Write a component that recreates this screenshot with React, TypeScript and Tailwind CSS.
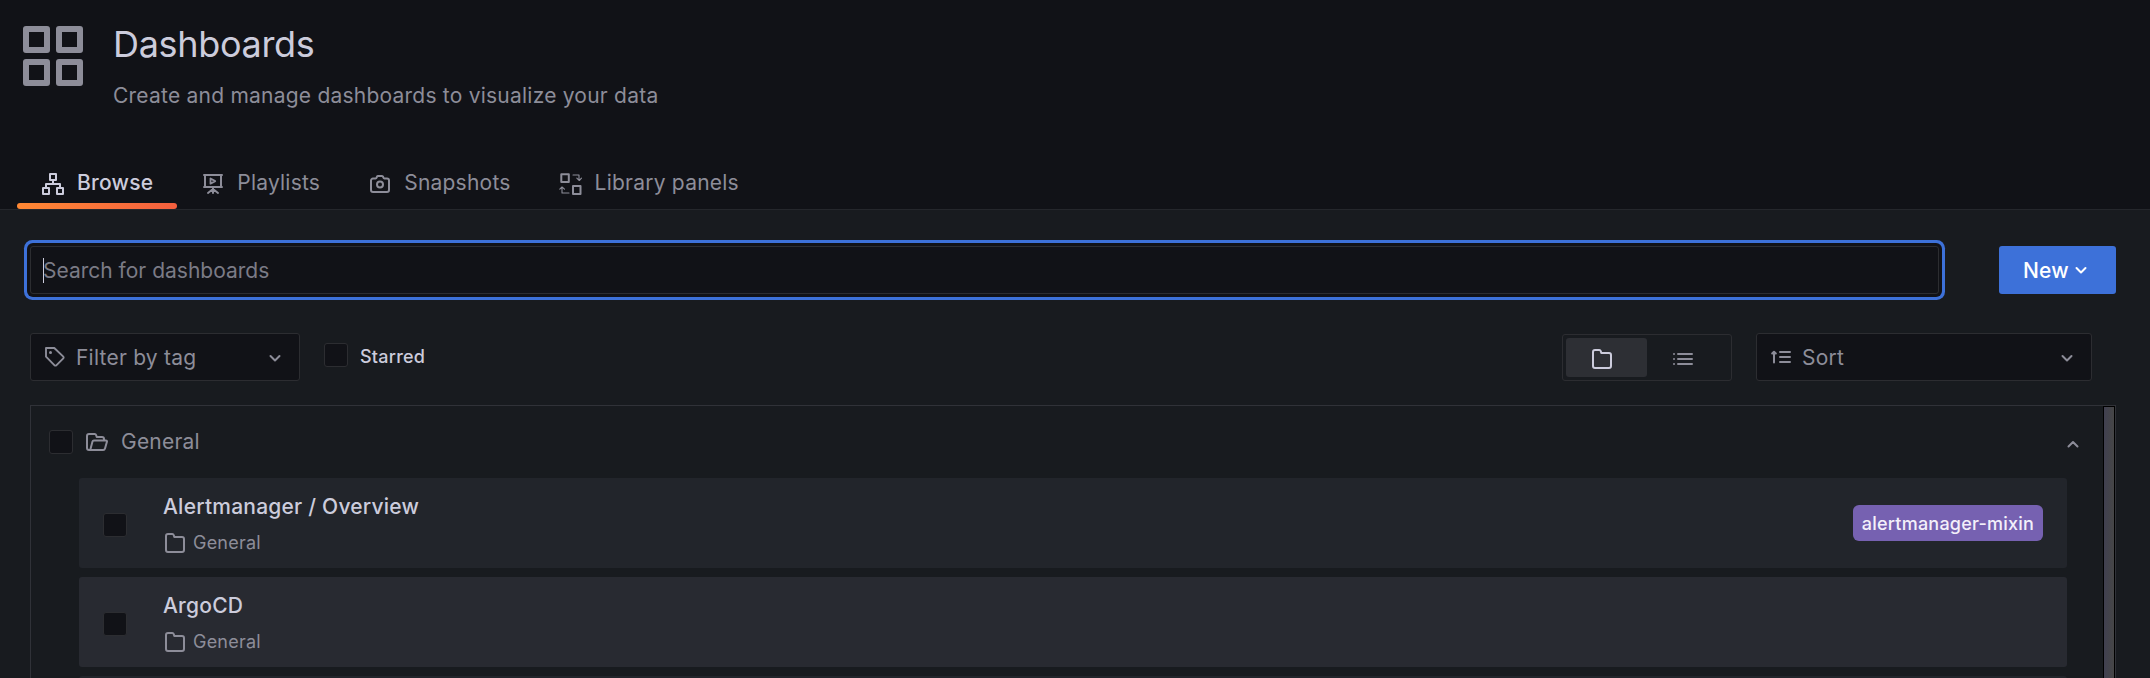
import React from "react";

type IconProps = { className?: string; children?: React.ReactNode };

const Icon = ({ className = "size-6", children }: IconProps) => (
  <svg viewBox="0 0 24 24" fill="none" stroke="currentColor" strokeWidth={2} strokeLinecap="round" strokeLinejoin="round" className={`shrink-0 ${className}`}>
    {children}
  </svg>
);

const AppsIcon = () => (
  <Icon className="size-[72px]">
    <path d="M3 3h7v7H3zM14 3h7v7h-7zM3 14h7v7H3zM14 14h7v7h-7z" />
  </Icon>
);

const SitemapIcon = () => (
  <Icon>
    <path d="M9 2h6v6H9zM2 16h6v6H2zM16 16h6v6h-6zM12 8v4M5 16v-4h14v4" />
  </Icon>
);

const PresentationIcon = () => (
  <Icon>
    <path d="M3 3h18M4 3v12M20 3v12M3 15h18M12 16v5M12 17l-5 4M12 17l5 4" />
    <path d="M9.500 6.500v5.200l4.700-2.600z" strokeWidth={1.800} />
  </Icon>
);

const CameraIcon = () => (
  <Icon>
    <path d="M5 6.500h2.600c.5 0 .8-.3 1-.8l.4-1c.2-.5.6-.7 1-.7h4c.5 0 .9.2 1 .7l.4 1c.2.5.5.8 1 .8H19a2 2 0 0 1 2 2V18a2 2 0 0 1-2 2H5a2 2 0 0 1-2-2V8.500a2 2 0 0 1 2-2z" />
    <circle cx="12" cy="12.500" r="3" />
  </Icon>
);

const LibraryIcon = () => (
  <Icon>
    <path d="M2.300 2.200h7.500v7.800H2.300zM14 14h7.500v8H14z" />
    <path d="M14 3h6v5M17.800 6.200L20.300 8.500l2.200-2.300M10 21H3v-5.500M.8 17.200L3 15l2.500 2.200" strokeWidth={1.100} />
  </Icon>
);

const TagIcon = () => (
  <Icon>
    <path d="M3 3h8.300l9 8.600a1.200 1.200 0 0 1 0 1.700l-7 7a1.200 1.200 0 0 1-1.700 0L3 11.700z" strokeWidth={1.900} />
    <circle cx="7.500" cy="7.500" r="1.500" fill="currentColor" stroke="none" />
  </Icon>
);

const FolderIcon = ({ className }: { className?: string }) => (
  <Icon className={className}>
    <path d="M19 21H5a2 2 0 0 1-2-2V5a2 2 0 0 1 2-2h4.300a1.500 1.500 0 0 1 1.400 1l.6 2H19a2 2 0 0 1 2 2v11a2 2 0 0 1-2 2z" />
  </Icon>
);

const FolderOpenIcon = () => (
  <Icon>
    <path d="M19 10.500V9a2 2 0 0 0-2-2h-5.300l-.6-2a1.500 1.500 0 0 0-1.400-1H4a2 2 0 0 0-2 2v12a2 2 0 0 0 2 2h14a2 2 0 0 0 2-1.500l2-7a1 1 0 0 0-1-1H9a1.500 1.500 0 0 0-1.500 1.100L5.500 19" />
  </Icon>
);

const ListIcon = () => (
  <Icon className="mt-[2px] size-6">
    <path d="M7 7h14M7 12h14M7 17h14" />
    <path d="M3 7h.01M3 12h.01M3 17h.01" />
  </Icon>
);

const SortIcon = () => (
  <Icon>
    <path d="M11 7h10M11 12h10M11 17h10M5 17.500V7M3.200 8.500L5 6.700l1.800 1.800" />
  </Icon>
);

const AngleDown = ({ className }: { className?: string }) => (
  <Icon className={className}>
    <path d="M7.500 10l4.500 4.500L16.500 10" />
  </Icon>
);

const AngleUp = () => (
  <Icon className="mt-[3px] size-6">
    <path d="M7.500 14.500L12 10l4.500 4.500" />
  </Icon>
);

const Checkbox = ({ className = "" }: { className?: string }) => (
  <span className={`block size-6 shrink-0 rounded-[3px] border border-[#2c2d31] bg-[#111217] ${className}`} />
);

const tabs = [
  { label: "Browse", icon: <SitemapIcon />, active: true },
  { label: "Playlists", icon: <PresentationIcon />, active: false },
  { label: "Snapshots", icon: <CameraIcon />, active: false },
  { label: "Library panels", icon: <LibraryIcon />, active: false },
];

const rows = [
  { title: "Alertmanager / Overview", folder: "General", tag: "alertmanager-mixin", hovered: false },
  { title: "ArgoCD", folder: "General", tag: "", hovered: true },
];

export default function App() {
  return (
    <div className="flex h-[678px] w-[2150px] flex-col overflow-hidden bg-[#181b1f] font-['Inter',sans-serif] text-[21px] leading-[33px] tracking-[0.225px] text-[#8d8d99]">
      <header className="flex h-[210px] shrink-0 flex-col justify-between border-b border-[#25272c] bg-[#111217]">
        <div className="flex pl-[17px] pt-5">
          <AppsIcon />
          <div className="ml-6">
            <h1 className="mt-[2px] text-[36px] leading-[44px] tracking-[-0.32px] text-[#ccccdc]">Dashboards</h1>
            <p className="mt-[13px]">Create and manage dashboards to visualize your data</p>
          </div>
        </div>
        <nav className="flex pl-[17px]">
          {tabs.map((t) => (
            <div key={t.label} className={t.active ? "text-[#ccccdc]" : ""}>
              <div className="flex h-[45px] items-start gap-3 px-6">
                <span className="mt-[14px]">{t.icon}</span>
                <span className={t.active ? "mt-[8px] font-medium" : "mt-[8px]"}>{t.label}</span>
              </div>
              <div className={t.active ? "h-[6px] rounded-[3px] bg-linear-to-r from-[#ff8833] to-[#f55f3e]" : "h-[6px]"} />
            </div>
          ))}
        </nav>
      </header>

      <main className="flex min-h-0 flex-1 flex-col pl-[30px] pr-[34px] pt-9">
        <div className="flex shrink-0 justify-between">
          <div className="flex h-12 w-[1909px] items-center rounded-[3px] border border-[#2c2d31] bg-[#111217] pl-3 shadow-[0_0_0_3px_#111217,0_0_0_6px_#3d71d9]">
            <span className="h-[25px] w-px bg-[#ccccdc]" />
            <span className="-ml-px tracking-normal text-[#7b7b86]">Search for dashboards</span>
          </div>
          <button className="flex h-12 w-[117px] items-center rounded-[3px] bg-[#3d71d9] pl-6 font-medium text-white">
            New
            <AngleDown />
          </button>
        </div>

        <div className="mt-[39px] flex h-12 shrink-0 items-center pr-6">
          <div className="flex h-12 w-[270px] items-center rounded-[3px] border border-[#2c2d31] bg-[#111217] pl-3 pr-3">
            <TagIcon />
            <span className="ml-[9px] flex-1">Filter by tag</span>
            <AngleDown className="mt-[2px] size-6" />
          </div>
          <Checkbox className="-mt-1 ml-6" />
          <span className="-mt-[2px] ml-3 text-[18px] font-medium text-[#ccccdc]">Starred</span>
          <div className="ml-auto mt-px flex h-[47px] w-[170px] rounded-[3px] border border-[#2c2d31] p-[3px]">
            <div className="flex w-[81px] items-center rounded-[3px] bg-[#2d2f34] pl-6 text-[#ccccdc]">
              <FolderIcon className="mt-[2px] size-6" />
            </div>
            <div className="flex items-center pl-6">
              <ListIcon />
            </div>
          </div>
          <div className="ml-6 flex h-12 w-[336px] items-center rounded-[3px] border border-[#2c2d31] bg-[#111217] pl-3 pr-3">
            <SortIcon />
            <span className="ml-[9px] flex-1">Sort</span>
            <AngleDown className="mt-[2px] size-6" />
          </div>
        </div>

        <section className="mt-6 flex min-h-0 flex-1 border-x border-t border-[#303238]">
          <div className="min-w-0 flex-1">
            <div className="flex h-[72px] items-center pl-[18px] pr-[18px]">
              <Checkbox />
              <span className="ml-3">
                <FolderOpenIcon />
              </span>
              <span className="-mt-[2px] ml-3 flex-1">General</span>
              <AngleUp />
            </div>
            <div className="flex flex-col gap-[9px] pl-12 pr-9">
              {rows.map((r) => (
                <div
                  key={r.title}
                  className={`flex h-[90px] shrink-0 items-center rounded-[3px] pl-6 pr-6 ${r.hovered ? "bg-[#282a31]" : "bg-[#22252b]"}`}
                >
                  <Checkbox className="mt-1" />
                  <div className="ml-9 flex-1 pt-[2px]">
                    <div className="font-medium text-[#ccccdc]">{r.title}</div>
                    <div className="mt-[3px] flex items-center text-[18px]">
                      <FolderIcon className="mt-[2px] size-6" />
                      <span className="ml-[6px]">{r.folder}</span>
                    </div>
                  </div>
                  {r.tag && (
                    <span className="flex h-9 w-[190px] items-center justify-center rounded-[6px] bg-[#7661b1] text-[18px] font-medium text-[#f3f0fa]">
                      {r.tag}
                    </span>
                  )}
                </div>
              ))}
              <div className="h-[90px] shrink-0 rounded-[3px] bg-[#22252b]" />
            </div>
          </div>
          <div className="w-3 shrink-0 border-x border-t border-black bg-linear-to-r from-[#404050] to-[#464646]" />
        </section>
      </main>
    </div>
  );
}
